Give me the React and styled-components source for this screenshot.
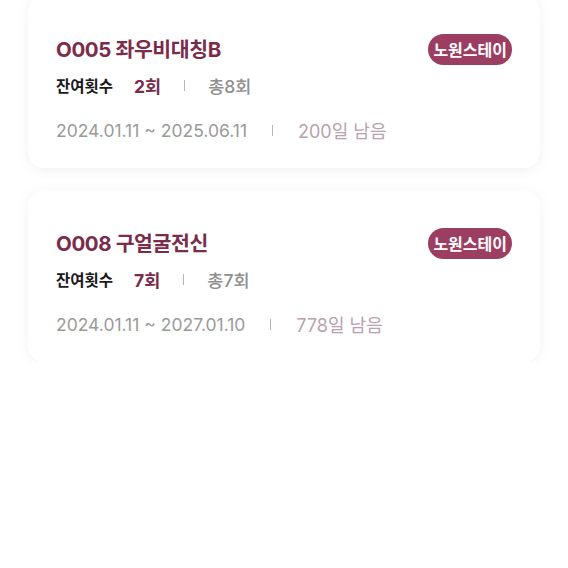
import React from 'react';
import styled, { createGlobalStyle } from 'styled-components';

const GlobalStyle = createGlobalStyle`
  html, body {
    margin: 0;
    padding: 0;
    background: #ffffff;
  }
  body {
    font-family: Inter, "Noto Sans CJK KR", sans-serif;
    -webkit-font-smoothing: antialiased;
  }
`;

const List = styled.ul`
  list-style: none;
  margin: -4px 0 0;
  padding: 0 28px;
  display: flex;
  flex-direction: column;
  gap: 22px;
`;

const Card = styled.li`
  background: #ffffff;
  border-radius: 16px;
  box-shadow: 0 2px 14px rgba(0, 0, 0, 0.06);
  padding: 36px 28px 27px;
  display: flex;
  flex-direction: column;
`;

const Header = styled.div`
  display: flex;
  align-items: center;
  justify-content: space-between;
  height: 32px;
`;

const Title = styled.h3`
  margin: 0;
  font-size: 20.5px;
  font-weight: 700;
  color: #7a2c4a;
  letter-spacing: -0.4px;
`;

const Badge = styled.span`
  display: inline-flex;
  align-items: center;
  justify-content: center;
  height: 31px;
  padding: 0 5px;
  border-radius: 16px;
  background: #9c3e62;
  color: #ffffff;
  font-size: 16px;
  font-weight: 700;
  margin-top: 2px;
`;

const Row = styled.div`
  display: flex;
  align-items: center;
  height: 22px;
  margin-top: ${p => p.$gap}px;
`;

const Label = styled.span`
  font-size: 15.5px;
  font-weight: 600;
  color: #1a1a1a;
  margin-right: 21px;
`;

const Count = styled.span`
  font-size: 17.5px;
  font-weight: 700;
  color: #7a2c4a;
`;

const Total = styled.span`
  font-size: 17.5px;
  font-weight: 500;
  color: #8e8e8e;
`;

const Divider = styled.span`
  display: inline-block;
  width: 1px;
  height: 11px;
  background: #b5b5b5;
  margin: 0 ${p => p.$space}px;
`;

const Period = styled.span`
  font-size: 17.5px;
  font-weight: 400;
  color: #9a9a9a;
`;

const Remain = styled.span`
  font-size: 18px;
  font-weight: 400;
  color: #b9a2ad;
`;

const tickets = [
  { code: 'O005', name: '좌우비대칭B', shop: '노원스테이', left: 2, total: 8, from: '2024.01.11', to: '2025.06.11', days: 200 },
  { code: 'O008', name: '구얼굴전신', shop: '노원스테이', left: 7, total: 7, from: '2024.01.11', to: '2027.01.10', days: 778 },
];

export default function App() {
  return (
    <>
      <GlobalStyle />
      <List>
        {tickets.map(t => (
          <Card key={t.code}>
            <Header>
              <Title>{t.code} {t.name}</Title>
              <Badge>{t.shop}</Badge>
            </Header>
            <Row $gap={10}>
              <Label>잔여횟수</Label>
              <Count>{t.left}회</Count>
              <Divider $space={23} />
              <Total>총{t.total}회</Total>
            </Row>
            <Row $gap={23}>
              <Period>{t.from} ~ {t.to}</Period>
              <Divider $space={25} />
              <Remain>{t.days}일 남음</Remain>
            </Row>
          </Card>
        ))}
      </List>
    </>
  );
}
